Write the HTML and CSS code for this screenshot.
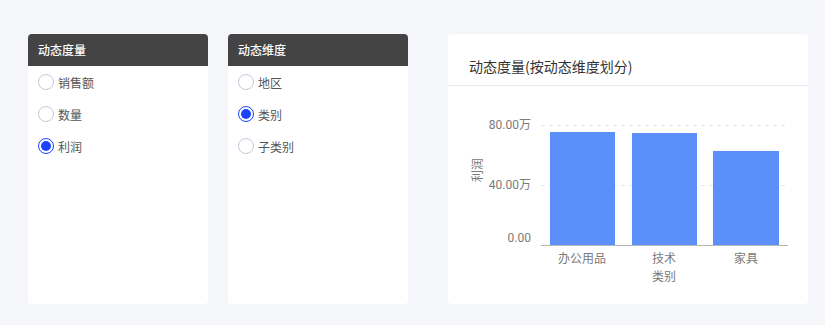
FILE: index.html
```html
<!DOCTYPE html>
<html>
<head>
<meta charset="utf-8">
<link rel="stylesheet" href="styles.css">
</head>
<body>
<div class="page">
  <div class="panel">
    <div class="panel-head">动态度量</div>
    <div class="opts">
      <div class="opt"><span class="radio"></span><span>销售额</span></div>
      <div class="opt"><span class="radio"></span><span>数量</span></div>
      <div class="opt"><span class="radio on"></span><span>利润</span></div>
    </div>
  </div>
  <div class="panel">
    <div class="panel-head">动态维度</div>
    <div class="opts">
      <div class="opt"><span class="radio"></span><span>地区</span></div>
      <div class="opt"><span class="radio on"></span><span>类别</span></div>
      <div class="opt"><span class="radio"></span><span>子类别</span></div>
    </div>
  </div>
  <div class="card">
    <div class="card-head">动态度量(按动态维度划分)</div>
    <div class="card-body">
      <svg class="chart" width="360" height="217" viewBox="0 0 360 217">
        <line x1="93" y1="39.5" x2="338" y2="39.5" class="grid"/>
        <line x1="93" y1="99.5" x2="338" y2="99.5" class="grid"/>
        <rect x="102" y="46" width="65" height="113" class="bar"/>
        <rect x="184" y="47" width="65" height="112" class="bar"/>
        <rect x="265" y="65" width="66" height="94" class="bar"/>
        <line x1="93" y1="159.5" x2="340" y2="159.5" class="axis"/>
        <text x="83" y="43" class="tick" text-anchor="end">80.00万</text>
        <text x="83" y="103" class="tick" text-anchor="end">40.00万</text>
        <text x="83" y="156" class="tick" text-anchor="end">0.00</text>
        <text x="0" y="0" class="tick" text-anchor="middle" transform="translate(34 84) rotate(-90)">利润</text>
        <text x="134" y="177" class="tick" text-anchor="middle">办公用品</text>
        <text x="216" y="177" class="tick" text-anchor="middle">技术</text>
        <text x="298" y="177" class="tick" text-anchor="middle">家具</text>
        <text x="216" y="195" class="tick" text-anchor="middle">类别</text>
      </svg>
    </div>
  </div>
</div>
</body>
</html>
```
FILE: styles.css
```css
html, body {
  margin: 0;
  padding: 0;
  background: #f5f6fa;
  font-family: "Noto Sans CJK SC", "Liberation Sans", sans-serif;
}
.page {
  display: flex;
  align-items: flex-start;
  padding: 34px 0 0 28px;
}
.panel {
  width: 180px;
  height: 270px;
  background: #fff;
  border-radius: 4px;
  overflow: hidden;
  margin-right: 20px;
}
.panel + .panel {
  margin-right: 40px;
}
.panel-head {
  height: 32px;
  line-height: 32px;
  background: #444444;
  color: #fff;
  font-size: 12px;
  font-weight: 500;
  padding-left: 10px;
}
.opts {
  display: flex;
  flex-direction: column;
}
.opt {
  height: 32px;
  display: flex;
  align-items: center;
  padding-left: 10px;
  font-size: 12px;
  color: #555;
}
.radio {
  width: 14px;
  height: 14px;
  border: 1px solid #c6c6d6;
  border-radius: 50%;
  margin-right: 4px;
  box-sizing: content-box;
  position: relative;
  background: #fff;
}
.radio.on {
  border-color: #1a44ff;
}
.radio.on::after {
  content: "";
  position: absolute;
  left: 2px;
  top: 2px;
  width: 10px;
  height: 10px;
  border-radius: 50%;
  background: #1a44ff;
}
.card {
  width: 360px;
  height: 270px;
  background: #fff;
  border-radius: 4px;
  display: flex;
  flex-direction: column;
}
.card-head {
  height: 52px;
  box-sizing: border-box;
  border-bottom: 1px solid #e8e9ee;
  padding: 22px 0 0 21px;
  font-size: 14px;
  font-weight: 400;
  color: #333;
  line-height: 20px;
}
.card-body {
  flex: 1;
}
.chart {
  display: block;
}
.grid {
  stroke: #e6e6e6;
  stroke-width: 1;
  stroke-dasharray: 4 4;
}
.axis {
  stroke: #b5b5b5;
  stroke-width: 1;
}
.bar {
  fill: #5b8ff9;
}
.tick {
  font-family: "Roboto", "Noto Sans CJK SC", sans-serif;
  font-size: 12px;
  fill: #7a7a7a;
}
```
